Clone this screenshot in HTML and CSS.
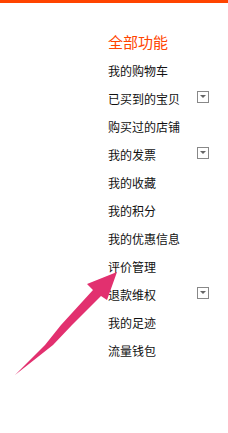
FILE: index.html
```html
<!DOCTYPE html>
<html lang="zh-CN">
<head>
    <meta charset="UTF-8">
    <meta name="viewport" content="width=device-width, initial-scale=1.0">
    <title>全部功能</title>
    <link rel="stylesheet" href="styles.css">
</head>
<body>
    <div class="top-bar"></div>

    <div class="menu">
        <h3 class="menu-title">全部功能</h3>
        <ul class="menu-list">
            <li class="menu-item">我的购物车</li>
            <li class="menu-item">已买到的宝贝 <span class="drop-btn"></span></li>
            <li class="menu-item">购买过的店铺</li>
            <li class="menu-item">我的发票 <span class="drop-btn"></span></li>
            <li class="menu-item">我的收藏</li>
            <li class="menu-item">我的积分</li>
            <li class="menu-item">我的优惠信息</li>
            <li class="menu-item">评价管理</li>
            <li class="menu-item">退款维权 <span class="drop-btn"></span></li>
            <li class="menu-item">我的足迹</li>
            <li class="menu-item">流量钱包</li>
        </ul>
    </div>

    <!-- annotation arrow pointing at 评价管理 -->
    <svg class="pointer" width="228" height="433" viewBox="0 0 228 433">
        <polygon points="117,272 87,284 93,290 61,325 45,345 15,375 53,345 72,325 101,296 107,300" fill="#e2306f"/>
    </svg>
</body>
</html>
```

FILE: styles.css
```css
:root {
    --orange: #ff4400;
    --text: #111;
    --box-border: #888;
}

* {
    margin: 0;
    padding: 0;
    box-sizing: border-box;
}

body {
    background: #fff;
    font-family: "Noto Sans CJK SC", "Noto Sans", sans-serif;
    position: relative;
    min-height: 433px;
}

.top-bar {
    height: 3px;
    background: var(--orange);
}

.menu {
    padding: 25px 0 0 108px;
}

.menu-title {
    font-size: 15px;
    font-weight: normal;
    color: var(--orange);
    line-height: 28px;
    height: 28px;
}

.menu-list {
    list-style: none;
    width: 101px;
}

.menu-item {
    display: flex;
    justify-content: space-between;
    align-items: center;
    height: 28px;
    font-size: 12px;
    color: var(--text);
}

.drop-btn {
    position: relative;
    width: 12px;
    height: 12px;
    border: 1px solid var(--box-border);
    margin-top: -2px;
}

.drop-btn::after {
    content: "";
    position: absolute;
    left: 2px;
    top: 3px;
    border-left: 3px solid transparent;
    border-right: 3px solid transparent;
    border-top: 3px solid #666;
}

.pointer {
    position: absolute;
    left: 0;
    top: 0;
}
```
